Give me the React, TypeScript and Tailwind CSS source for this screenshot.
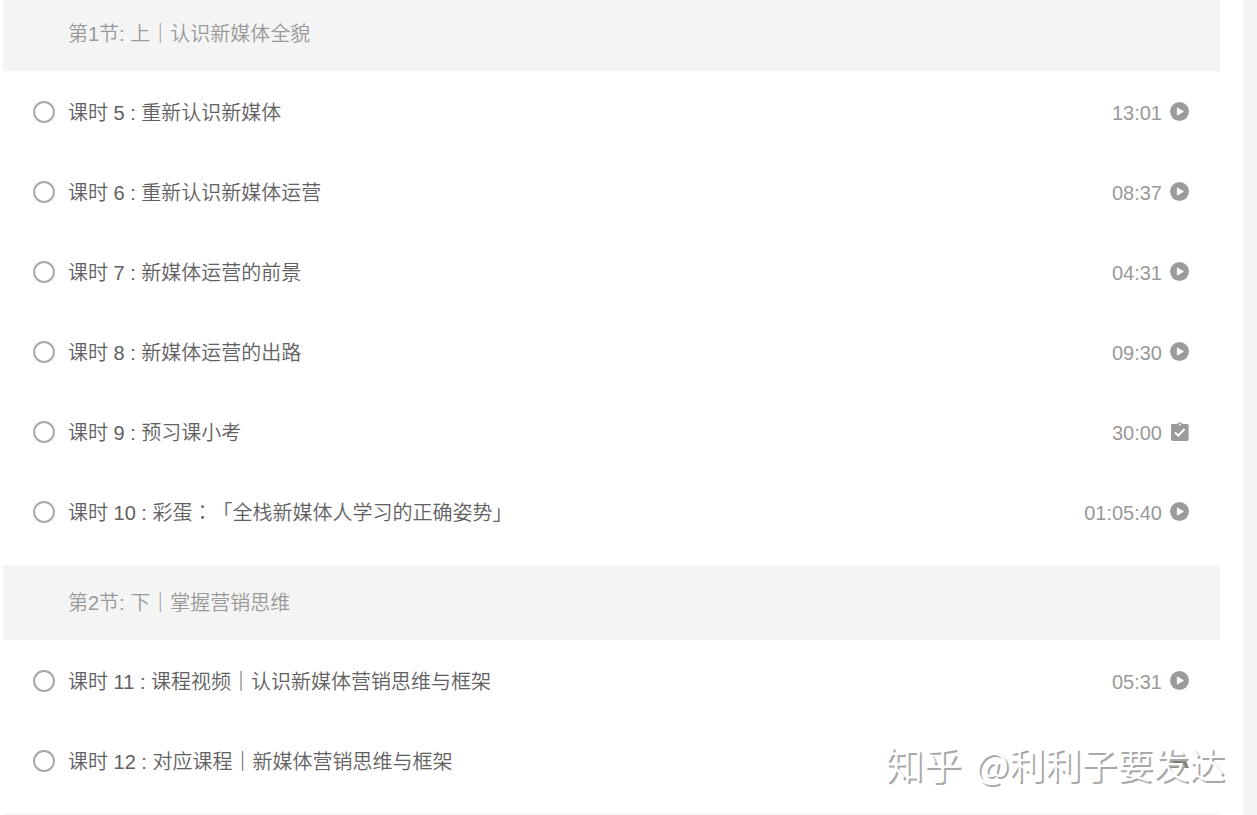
import React from "react";

type Kind = "video" | "quiz" | "document";

interface Lesson {
  no: number;
  title: React.ReactNode;
  time?: string;
  kind: Kind;
}

interface Section {
  heading: React.ReactNode;
  lessons: Lesson[];
}

function Bar() {
  return <span className="font-medium">｜</span>;
}

const sections: Section[] = [
  {
    heading: <>第1节: 上<Bar />认识新媒体全貌</>,
    lessons: [
      { no: 5, title: "重新认识新媒体", time: "13:01", kind: "video" },
      { no: 6, title: "重新认识新媒体运营", time: "08:37", kind: "video" },
      { no: 7, title: "新媒体运营的前景", time: "04:31", kind: "video" },
      { no: 8, title: "新媒体运营的出路", time: "09:30", kind: "video" },
      { no: 9, title: "预习课小考", time: "30:00", kind: "quiz" },
      {
        no: 10,
        title: (
          <>
            彩蛋<span className="font-['Noto_Sans_CJK_JP',sans-serif] leading-none">：</span>「全栈新媒体人学习的正确姿势」
          </>
        ),
        time: "01:05:40",
        kind: "video",
      },
    ],
  },
  {
    heading: <>第2节: 下<Bar />掌握营销思维</>,
    lessons: [
      { no: 11, title: <>课程视频<Bar />认识新媒体营销思维与框架</>, time: "05:31", kind: "video" },
      { no: 12, title: <>对应课程<Bar />新媒体营销思维与框架</>, kind: "document" },
    ],
  },
];

function KindIcon({ kind }: { kind: Kind }) {
  if (kind === "video") {
    return (
      <svg viewBox="0 0 20 20" className="size-5 shrink-0" aria-hidden="true">
        <circle cx="10.5" cy="9.5" r="9.4" fill="#9b9c9a" />
        <path d="M8.4 6 L14.4 9.5 L8.4 13 Z" fill="#fff" stroke="#fff" strokeWidth="1" strokeLinejoin="round" />
      </svg>
    );
  }
  if (kind === "quiz") {
    return (
      <svg viewBox="0 0 20 20" className="size-5 shrink-0" aria-hidden="true">
        <path
          d="M3.4 1.9 H8.2 A2.8 2.8 0 0 1 13.4 1.9 H18.2 A1.4 1.4 0 0 1 19.6 3.3 V17.6 A1.4 1.4 0 0 1 18.2 19 H3.4 A1.4 1.4 0 0 1 2 17.6 V3.3 A1.4 1.4 0 0 1 3.4 1.9 Z"
          fill="#9b9c9a"
        />
        <circle cx="10.8" cy="2.4" r="1" fill="#fff" />
        <path d="M6 10.4 L9.2 13.6 L15.6 7" fill="none" stroke="#fff" strokeWidth="2" />
      </svg>
    );
  }
  return (
    <svg viewBox="0 0 20 20" className="size-5 shrink-0" aria-hidden="true">
      <path d="M4 4.5 H15 L20 17 H1 Z" fill="#85857f" />
      <path d="M7 8 H13 M6 12 H12" stroke="#5d5b50" strokeWidth="1.6" />
    </svg>
  );
}

function LessonRow({ lesson }: { lesson: Lesson }) {
  return (
    <li>
      <a href="#" className="flex h-20 items-center pl-[30px] pr-[31px] text-[#616161]">
        <span className="mr-[13px] size-[22px] shrink-0 rounded-full border-2 border-[#a8a8a8]" />
        <span className="min-w-0 flex-1 pt-0.5">
          课时 {lesson.no} : {lesson.title}
        </span>
        <span className="flex items-center gap-[7px] text-[#999999]">
          {lesson.time && <span className="pt-0.5">{lesson.time}</span>}
          <KindIcon kind={lesson.kind} />
        </span>
      </a>
    </li>
  );
}

export default function App() {
  return (
    <div className="relative flex min-h-screen overflow-hidden bg-[#f4f4f4] font-['Liberation_Sans','Noto_Sans_CJK_SC',sans-serif] text-xl font-[350] [text-spacing-trim:space-all]">
      <main className="mr-[14px] flex-1 bg-white pl-[3px] pr-[23px]">
        <div className="-mt-1 border-b border-[#f4f4f4]">
          {sections.map((section, index) => (
            <section key={index}>
              <h2 className="flex h-[75px] items-center bg-[#f4f4f4] pl-[65px] text-[#999999]">
                <span>{section.heading}</span>
              </h2>
              <ul className="pb-[13px] pt-px">
                {section.lessons.map((lesson) => (
                  <LessonRow key={lesson.no} lesson={lesson} />
                ))}
              </ul>
            </section>
          ))}
        </div>
      </main>
      <div className="pointer-events-none absolute bottom-8 right-8 flex items-baseline gap-3.5 whitespace-nowrap font-['Noto_Sans_CJK_SC',sans-serif] text-4xl/10 text-white [text-shadow:2px_2px_0_#a8a8a8]">
        <span className="text-[38px]/10">知乎</span>
        <span>@利利子要发达</span>
      </div>
    </div>
  );
}
